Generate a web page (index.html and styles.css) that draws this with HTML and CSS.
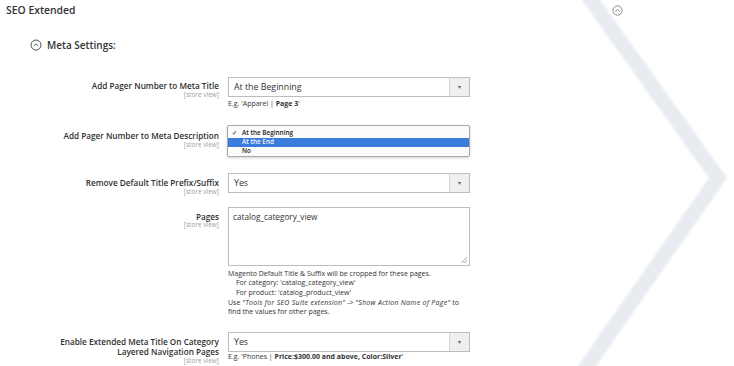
FILE: index.html
```html
<!DOCTYPE html>
<html>
<head>
<meta charset="utf-8">
<link rel="stylesheet" href="styles.css">
</head>
<body>
<div class="page">
  <svg class="chevron" width="734" height="366" viewBox="0 0 734 366">
    <defs><filter id="b"><feGaussianBlur stdDeviation="1.2"/></filter></defs>
    <polyline points="588,-4 718,178 584,370" fill="none" stroke="#e8ecf1" stroke-width="15" filter="url(#b)"/>
  </svg>
  <svg class="top-toggle" width="11" height="11" viewBox="0 0 11 11">
    <circle cx="5.5" cy="5.5" r="4.6" fill="none" stroke="#7a7a7a" stroke-width="0.9"/>
    <path d="M3.4 6.4 L5.5 4.5 L7.6 6.4" fill="none" stroke="#7a7a7a" stroke-width="0.9"/>
  </svg>

  <h1 class="section-title">SEO Extended</h1>

  <div class="group-title">
    <svg class="toggle" width="12" height="12" viewBox="0 0 12 12">
      <circle cx="6" cy="6" r="5" fill="none" stroke="#555" stroke-width="1"/>
      <path d="M3.7 7 L6 4.8 L8.3 7" fill="none" stroke="#555" stroke-width="1"/>
    </svg>
    <span>Meta Settings:</span>
  </div>

  <div class="row row-1">
    <div class="label"><div class="name">Add Pager Number to Meta Title</div><div class="scope">[store view]</div></div>
    <div class="field">
      <div class="select"><span class="value">At the Beginning</span><span class="arrow">▾</span></div>
      <div class="hint">E.g. 'Apparel | <b>Page 3</b>'</div>
    </div>
  </div>

  <div class="row row-2">
    <div class="label"><div class="name">Add Pager Number to Meta Description</div><div class="scope">[store view]</div></div>
    <div class="field">
      <div class="dropdown">
        <div class="opt"><span class="check">✓</span>At the Beginning</div>
        <div class="opt selected">At the End</div>
        <div class="opt">No</div>
      </div>
    </div>
  </div>

  <div class="row row-3">
    <div class="label"><div class="name">Remove Default Title Prefix/Suffix</div><div class="scope">[store view]</div></div>
    <div class="field">
      <div class="select"><span class="value">Yes</span><span class="arrow">▾</span></div>
    </div>
  </div>

  <div class="row row-4">
    <div class="label"><div class="name">Pages</div><div class="scope">[store view]</div></div>
    <div class="field">
      <div class="textarea"><div class="value">catalog_category_view</div>
        <svg class="grip" width="7" height="7" viewBox="0 0 7 7"><path d="M1 7 L7 1 M3.5 7 L7 3.5 M5.5 7 L7 5.5" stroke="#999" stroke-width="0.8"/></svg>
      </div>
      <div class="note">
        <div>Magento Default Title &amp; Suffix will be cropped for these pages.</div>
        <div class="ind">For category: 'catalog_category_view'</div>
        <div class="ind">For product: 'catalog_product_view'</div>
        <div>Use <i>"Tools for SEO Suite extension"</i> -&gt; <i>"Show Action Name of Page"</i> to</div>
        <div>find the values for other pages.</div>
      </div>
    </div>
  </div>

  <div class="row row-5">
    <div class="label"><div class="name">Enable Extended Meta Title On Category<br>Layered Navigation Pages</div><div class="scope">[store view]</div></div>
    <div class="field">
      <div class="select"><span class="value">Yes</span><span class="arrow">▾</span></div>
      <div class="hint">E.g. 'Phones | <b>Price:$300.00 and above, Color:Silver</b>'</div>
    </div>
  </div>
</div>
</body>
</html>
```

FILE: styles.css
```css
html, body {
  margin: 0;
  padding: 0;
  background: #ffffff;
}
body {
  font-family: "Open Sans", "Noto Sans", sans-serif;
  color: #303030;
}
.page {
  position: relative;
  width: 734px;
  height: 366px;
  overflow: hidden;
}
.chevron {
  position: absolute;
  left: 0;
  top: 0;
  z-index: 0;
}
.top-toggle {
  position: absolute;
  left: 612px;
  top: 5px;
}
.section-title {
  position: relative;
  margin: 0;
  padding: 4px 0 0 6px;
  font-size: 10.4px;
  font-weight: 600;
  line-height: 13px;
  color: #333;
}
.group-title {
  position: relative;
  display: flex;
  align-items: center;
  gap: 5px;
  margin: 21px 0 0 30px;
  font-size: 10px;
  font-weight: 600;
  color: #333;
  line-height: 14px;
}
.row {
  position: relative;
  display: grid;
  grid-template-columns: 219px 242px;
  column-gap: 9px;
}
.label {
  text-align: right;
}
.name {
  font-size: 8.2px;
  font-weight: 600;
  line-height: 10.5px;
  color: #303030;
}
.scope {
  font-size: 6.5px;
  line-height: 6px;
  color: #a0a0a0;
}
.select {
  position: relative;
  box-sizing: border-box;
  height: 20px;
  border: 1px solid #bdbdbd;
  background: #fff;
  display: flex;
  align-items: center;
}
.select .value {
  flex: 1;
  padding-left: 5px;
  font-size: 8.8px;
  color: #333;
}
.select .arrow {
  box-sizing: border-box;
  width: 20px;
  height: 100%;
  border-left: 1px solid #d3d3d3;
  background: #efefef;
  font-size: 6px;
  color: #666;
  display: flex;
  align-items: center;
  justify-content: center;
}
.hint {
  margin-top: 2px;
  font-size: 7px;
  line-height: 9px;
  color: #333;
}
.hint b {
  font-weight: 700;
}
.row-1 {
  margin-top: 25px;
}
.row-1 .label {
  padding-top: 4px;
}
.row-2 {
  margin-top: 17px;
}
.row-2 .label {
  padding-top: 6px;
}
.dropdown {
  box-sizing: border-box;
  width: 243px;
  margin-left: -1px;
  border: 1px solid #a9a9a9;
  border-radius: 2px;
  background: #fbfbfb;
  box-shadow: 0 1px 3px rgba(0,0,0,0.18);
  padding: 3px 0 1px;
}
.opt {
  height: 8.8px;
  line-height: 8.8px;
  font-size: 6.4px;
  font-weight: 600;
  color: #222;
  padding-left: 14px;
  position: relative;
}
.opt .check {
  position: absolute;
  left: 4px;
  font-size: 5.5px;
  color: #444;
}
.opt.selected {
  background: #3b7ddd;
  color: #f0f5ff;
}
.row-3 {
  margin-top: 16px;
}
.row-3 .label {
  padding-top: 5px;
}
.row-4 {
  margin-top: 12px;
}
.row-4 .label {
  padding-top: 5px;
}
.textarea {
  position: relative;
  box-sizing: border-box;
  height: 59px;
  border: 1px solid #bdbdbd;
  background: #fff;
  padding: 4px 4px;
  font-size: 8.2px;
  line-height: 10px;
}
.textarea .value {
  font-size: 8.2px;
  line-height: 10px;
  color: #333;
}
.grip {
  position: absolute;
  right: 2px;
  bottom: 2px;
}
.note {
  margin-top: 3px;
  font-size: 7px;
  line-height: 9.6px;
  color: #333;
}
.note i {
  letter-spacing: 0.28px;
}
.note .ind {
  padding-left: 8px;
}
.row-5 {
  margin-top: 15px;
}
.row-5 .label {
  padding-top: 5px;
}
.row-5 .hint {
  margin-top: 0;
}
```
